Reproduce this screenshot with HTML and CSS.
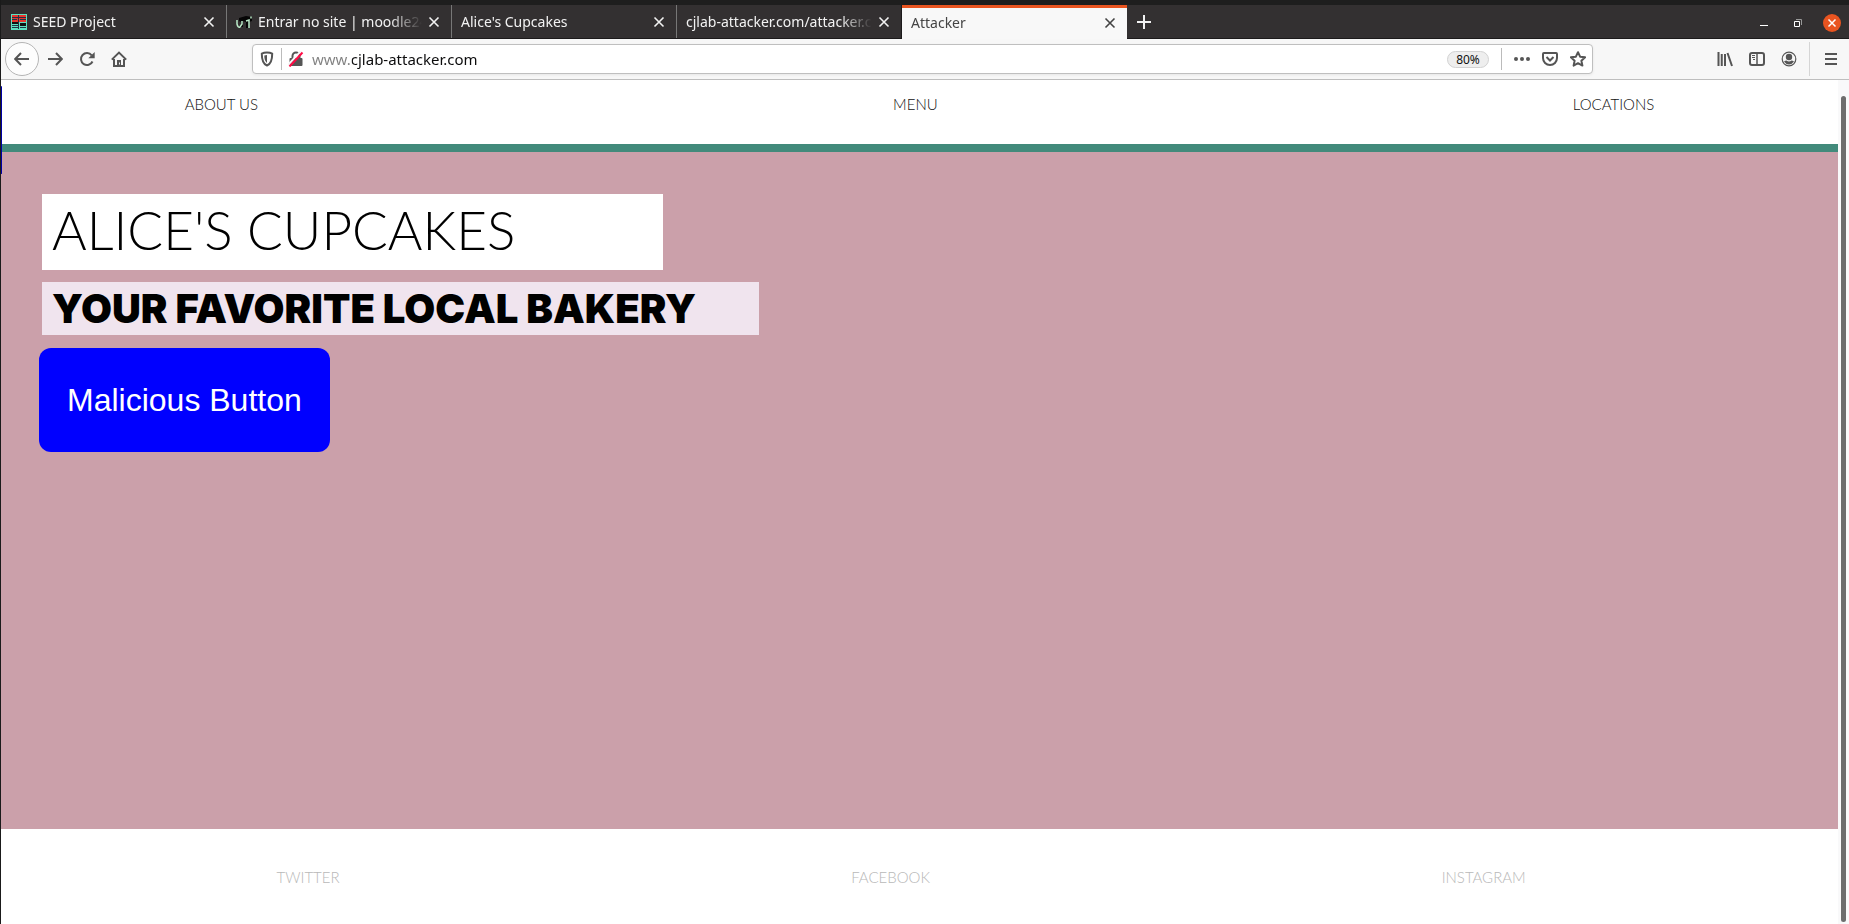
FILE: index.html
```html
<!DOCTYPE html>
<html lang="en">
<head>
<meta charset="utf-8">
<title>Attacker</title>
<link rel="stylesheet" href="styles.css">
</head>
<body>
<div class="window">
  <header class="chrome">
    <div class="tabbar">
      <div class="tab">
        <svg class="favicon" viewBox="0 0 16 16"><path fill="#5ee0c0" d="M0 0h16v16H0z"/><path fill="#e8342c" d="M1 1h6v7H1zM8 1h7v7H8z"/><path fill="#111" d="M1 8h6v2H1zM9 9h6v3H9z"/><path fill="none" stroke="#234" d="M1 3.5h14M1 5.5h5M9 5.5h6M1 11.5h6M1 13.5h7M9 13.5h6M7.5 1v14"/></svg>
        <button class="tab-title" type="button">SEED Project</button>
        <button class="close" type="button" aria-label="Close SEED Project"><svg viewBox="0 0 12 12"><path d="m1.500 1.500 9 9m0-9-9 9"/></svg></button>
      </div>
      <div class="tab">
        <svg class="favicon" viewBox="0 0 16 16"><path fill="#050505" d="M3 4l7-2 6 1v4l-3 1v6h-3V8L7 7v6H5V8L3 7z"/><path fill="none" stroke="#bcebc9" stroke-width="1.500" d="M1 6v4q1 4 3 3l2-3V7m4 0 3-1v8M15 2.500v2"/></svg>
        <button class="tab-title" type="button">Entrar no site | moodle24</button>
        <button class="close" type="button" aria-label="Close Entrar no site"><svg viewBox="0 0 12 12"><path d="m1.500 1.500 9 9m0-9-9 9"/></svg></button>
      </div>
      <div class="tab">
        <button class="tab-title" type="button">Alice's Cupcakes</button>
        <button class="close" type="button" aria-label="Close Alice's Cupcakes"><svg viewBox="0 0 12 12"><path d="m1.500 1.500 9 9m0-9-9 9"/></svg></button>
      </div>
      <div class="tab">
        <button class="tab-title" type="button">cjlab-attacker.com/attacker.c</button>
        <button class="close" type="button" aria-label="Close cjlab-attacker.com"><svg viewBox="0 0 12 12"><path d="m1.500 1.500 9 9m0-9-9 9"/></svg></button>
      </div>
      <div class="tab active">
        <button class="tab-title" type="button">Attacker</button>
        <button class="close" type="button" aria-label="Close Attacker"><svg viewBox="0 0 12 12"><path d="m1.500 1.500 9 9m0-9-9 9"/></svg></button>
      </div>
      <button class="new-tab" type="button" aria-label="New tab"><svg viewBox="0 0 14 14"><path d="M7 0v14M0 7h14"/></svg></button>
      <div class="window-controls">
        <button type="button" aria-label="Minimize"><svg viewBox="0 0 18 18"><path fill="#fff" d="M5 11h8v1H5z"/></svg></button>
        <button type="button" aria-label="Restore"><svg viewBox="0 0 18 18"><path fill="none" stroke="#999" d="M7 5.500h5.500V11"/><path fill="none" stroke="#fff" d="M5.500 7.500h5v5h-5z"/></svg></button>
        <button type="button" aria-label="Close window"><svg viewBox="0 0 18 18"><circle cx="9" cy="9" r="9" fill="#e95420"/><path fill="none" stroke="#fff" stroke-width="1.500" d="m5.500 5.500 7 7m0-7-7 7"/></svg></button>
      </div>
    </div>

    <div class="toolbar">
      <div class="nav-buttons">
        <button class="back" type="button" aria-label="Back"><svg viewBox="0 0 16 16"><path d="M15 8H1.500M7 2 1.200 8 7 14"/></svg></button>
        <button type="button" aria-label="Forward"><svg viewBox="0 0 16 16"><path d="M1 8h13.500M9 2l5.800 6L9 14"/></svg></button>
        <button type="button" aria-label="Reload"><svg viewBox="0 0 16 16"><path d="M13.500 10.500a6 6 0 1 1-.8-6.200"/><path class="solid" d="M15.700 1v6.200H9.300z"/></svg></button>
        <button type="button" aria-label="Home"><svg viewBox="0 0 16 16"><path d="M.8 8.600 8 1.600l7.200 7M3 8v7h10V8"/><path class="solid" d="M6 9h4v6H6z"/><path class="knob" d="M8.500 11.500v2"/></svg></button>
      </div>

      <div class="urlbar">
        <svg class="icon" viewBox="0 0 16 16"><path d="M8 1.500c2 0 4 .5 5.200 1.200C13.200 8.500 12 13 8 14.500 4 13 2.800 8.500 2.800 2.700 4 2 6 1.500 8 1.500z"/><path class="solid" d="M8 4v8C6 10.500 5.300 8 5.300 4.600z"/></svg>
        <span class="divider"></span>
        <svg class="icon lock" viewBox="0 0 16 16"><path d="M4.500 7V5a3.500 3.500 0 0 1 7 0v2"/><path class="solid" d="M2.500 7h11q1 0 1 1v6q0 1-1 1h-11q-1 0-1-1V8q0-1 1-1z"/><path stroke="#f7f7f7" d="M0 14 13 0"/><path class="slash" d="M1.500 15.500 14.500 1.500"/></svg>
        <input class="url" type="text" aria-label="Address" value="www.cjlab-attacker.com">
        <button class="zoom" type="button">80%</button>
        <span class="divider"></span>
        <button type="button" aria-label="Page actions"><svg viewBox="0 0 16 16"><g class="solid"><circle cx="2" cy="8" r="2"/><circle cx="8" cy="8" r="2"/><circle cx="14" cy="8" r="2"/></g></svg></button>
        <button type="button" aria-label="Save to Pocket"><svg viewBox="0 0 16 16"><path d="M1.900 2h12.200q.9 0 .9.900V7a7 7 0 0 1-14 0V2.900Q1 2 1.900 2z"/><path d="m4.500 6 3.500 3.500L11.500 6"/></svg></button>
        <button type="button" aria-label="Bookmark"><svg viewBox="0 0 16 16"><path stroke-linejoin="round" d="m8 1.200 2.100 4.500 5 .6-3.700 3.400 1 4.900L8 12.200l-4.400 2.400 1-4.900L.9 6.300l5-.6z"/></svg></button>
      </div>

      <div class="tools">
        <button type="button" aria-label="Library"><svg viewBox="0 0 16 16"><path d="M1.500 1v14M4.750 3v12M8 3v12M10.500 2l4.500 13"/></svg></button>
        <button type="button" aria-label="Sidebars"><svg viewBox="0 0 16 16"><rect x="1" y="2" width="14" height="12" rx="2"/><path stroke-width="1.500" d="M8 2v12"/><path stroke-width="1" d="M3 4.500h3M3 6.500h3M4 8.500h2"/></svg></button>
        <button type="button" aria-label="Account"><svg viewBox="0 0 16 16"><circle cx="8" cy="8" r="6.800" stroke-width="1.200"/><circle class="solid" cx="8" cy="6" r="3.200"/><path class="solid" d="M3 10.500q1.500-1 2.500-1 2.500 2 5 0 1 0 2.500 1Q11 13.500 8 13.500t-5-3z"/></svg></button>
        <span class="divider tall"></span>
        <button type="button" aria-label="Menu"><svg viewBox="0 0 16 16"><path d="M2 3h12M2 8h12M2 13h12"/></svg></button>
      </div>
    </div>
  </header>

  <div class="viewport">
    <div class="page">
      <nav class="site-nav">
        <a href="#about">About us</a>
        <a href="#menu">Menu</a>
        <a href="#locations">Locations</a>
      </nav>
      <main class="hero">
        <h1>Alice's Cupcakes</h1>
        <h2>Your favorite local bakery</h2>
        <button class="malicious" type="button">Malicious Button</button>
      </main>
      <footer class="site-footer">
        <a href="#twitter">Twitter</a>
        <a href="#facebook">Facebook</a>
        <a href="#instagram">Instagram</a>
      </footer>
      <span class="sliver"></span>
    </div>
    <div class="scrollbar"><div class="thumb"></div></div>
  </div>
</div>
</body>
</html>
```

FILE: styles.css
```css
* { box-sizing: border-box; }

body {
  margin: 0;
  font-family: "Noto Sans", sans-serif;
  font-size: 14px;
}

button {
  display: flex;
  align-items: center;
  justify-content: center;
  margin: 0;
  padding: 0;
  border: 0;
  background: none;
  color: inherit;
  font: inherit;
}

svg { display: block; flex: none; }

.window {
  display: flex;
  flex-direction: column;
  min-height: 100vh;
  border-left: 1px solid #1a1a1a;
}

/* Tabs */
.tabbar {
  display: flex;
  height: 39px;
  padding-left: 1px;
  border-top: 5px solid #1e1e1e;
  border-bottom: 1px solid #1c1a1b;
  background: #333031;
  color: #f2f2f2;
}

.tab {
  display: flex;
  align-items: center;
  flex: 0 1 225px;
  min-width: 0;
  gap: 6px;
  padding: 3px 11px 0 9px;
  border-right: 1px solid #777;
}

.tab > svg,
.close { margin-top: -2px; }

.tab:nth-child(4) { border-right-color: #1c1a1b; }

.tab-title {
  display: block;
  flex: 1;
  min-width: 0;
  margin-top: -3px;
  overflow: hidden;
  text-align: left;
  white-space: nowrap;
  mask-image: linear-gradient(90deg, #000 calc(100% - 32px), transparent);
}

.favicon { width: 16px; height: 16px; }

.close svg { width: 12px; height: 12px; }

.close path,
.new-tab path {
  fill: none;
  stroke: currentColor;
  stroke-width: 2;
}

.close path { stroke-width: 1.6; }

.active {
  height: 34px;
  padding-top: 0;
  border-top: 3px solid #e95420;
  border-right: 0;
  background: #f8f8f8;
  color: #444;
}

.new-tab { width: 34px; padding-bottom: 0; }
.new-tab svg { width: 14px; height: 14px; }

.window-controls {
  display: flex;
  align-items: center;
  gap: 16px;
  margin-left: auto;
  padding: 3px 8px 0 0;
}

.window-controls svg { width: 18px; height: 18px; }

/* Toolbar */
.toolbar {
  display: flex;
  align-items: center;
  height: 41px;
  padding-right: 10px;
  border-bottom: 1px solid #bebebe;
  background: #f7f7f7;
  color: #555;
}

.toolbar svg {
  width: 16px;
  height: 16px;
  fill: none;
  stroke: currentColor;
  stroke-width: 2;
}

.toolbar .solid { fill: currentColor; stroke: none; }
.toolbar .knob { stroke: #f7f7f7; stroke-width: 1; }
.toolbar .slash { stroke: #ff0a45; }

.nav-buttons {
  display: flex;
  align-items: center;
  gap: 16px;
  padding-left: 4px;
}

.back {
  width: 34px;
  height: 34px;
  margin-right: -8px;
  border: 1px solid #b5b5b5;
  border-radius: 50%;
  background: #fdfdfd;
}

.urlbar {
  display: flex;
  align-items: center;
  flex: 1;
  gap: 12px;
  min-width: 0;
  height: 30px;
  margin: 0 124px 0 125px;
  padding: 0 6px;
  border: 1px solid #bfbfbf;
  border-radius: 4px;
  background: #fff;
  box-shadow: 0 1px 3px #0001;
}

.urlbar > .icon { margin-right: -6px; }
.urlbar > .icon + .url { margin-left: 2px; }

.url {
  flex: 1;
  min-width: 0;
  padding: 0;
  border: 0;
  outline: 0;
  background: linear-gradient(90deg, #808080 40px, #0c0c0d 40px);
  background-clip: text;
  color: transparent;
  font: inherit;
  font-size: 15px;
}

.divider {
  flex: none;
  width: 1px;
  height: 22px;
  background: #bbb;
}

.urlbar > .icon + .divider { margin-right: -6px; }

.tall { height: 34px; background: #d5d5d5; }

.zoom {
  width: 42px;
  height: 17px;
  border: 1px solid #d2d2d2;
  border-radius: 9px;
  background: #eee;
  color: #111;
  font-size: 12px;
}

.tools { display: flex; align-items: center; gap: 16px; }
.tools .divider { margin: 0 -3px -0px -4px; }

/* Page */
.viewport { display: flex; flex: 1; }

.page {
  position: relative;
  display: flex;
  flex: 1;
  flex-direction: column;
  min-width: 0;
  background: #fff;
  font-family: Lato, sans-serif;
}

.sliver {
  position: absolute;
  top: 6px;
  left: 0;
  width: 1px;
  height: 88px;
  border-radius: 1px;
  background: #0000a8;
}

.site-nav,
.site-footer {
  display: flex;
  justify-content: space-between;
  font-weight: 300;
  font-size: 15px;
  line-height: 20px;
  text-transform: uppercase;
}

.site-nav {
  padding: 14px 10% 30px;
  border-bottom: 8px solid #428a7b;
}

.site-nav a { color: #111; text-decoration: none; }

.hero {
  display: flex;
  flex: 1;
  flex-direction: column;
  align-items: flex-start;
  padding: 42px 41px;
  background: #cba0aa;
}

h1,
h2 {
  max-width: 100%;
  margin: 0 0 12px;
  padding: 0 10px;
  color: #000;
  text-transform: uppercase;
}

h1 {
  width: 621px;
  padding-block: 6px 10px;
  background: #fff;
  font-weight: 300;
  font-size: 53px;
  line-height: 60px;
}

h2 {
  width: 717px;
  margin-bottom: 13px;
  background: #f0e4ee;
  font-family: Inter, sans-serif;
  font-weight: 900;
  font-size: 40px;
  line-height: 53px;
}

.malicious {
  margin-left: -3px;
  padding: 34px 28px;
  border-radius: 12px;
  background: #00f;
  color: #fff;
  font-family: "Liberation Sans", Arial, sans-serif;
  font-size: 32px;
  line-height: 36px;
}

.site-footer { padding: 38px 17% 37px 15%; }
.site-footer a { color: #b8b8b8; text-decoration: none; }

.scrollbar {
  display: flex;
  width: 11px;
  padding: 16px 3px 2px;
  background: #f9f9fa;
}

.thumb { flex: 1; border-radius: 3px; background: #6d6d6d; }
```
